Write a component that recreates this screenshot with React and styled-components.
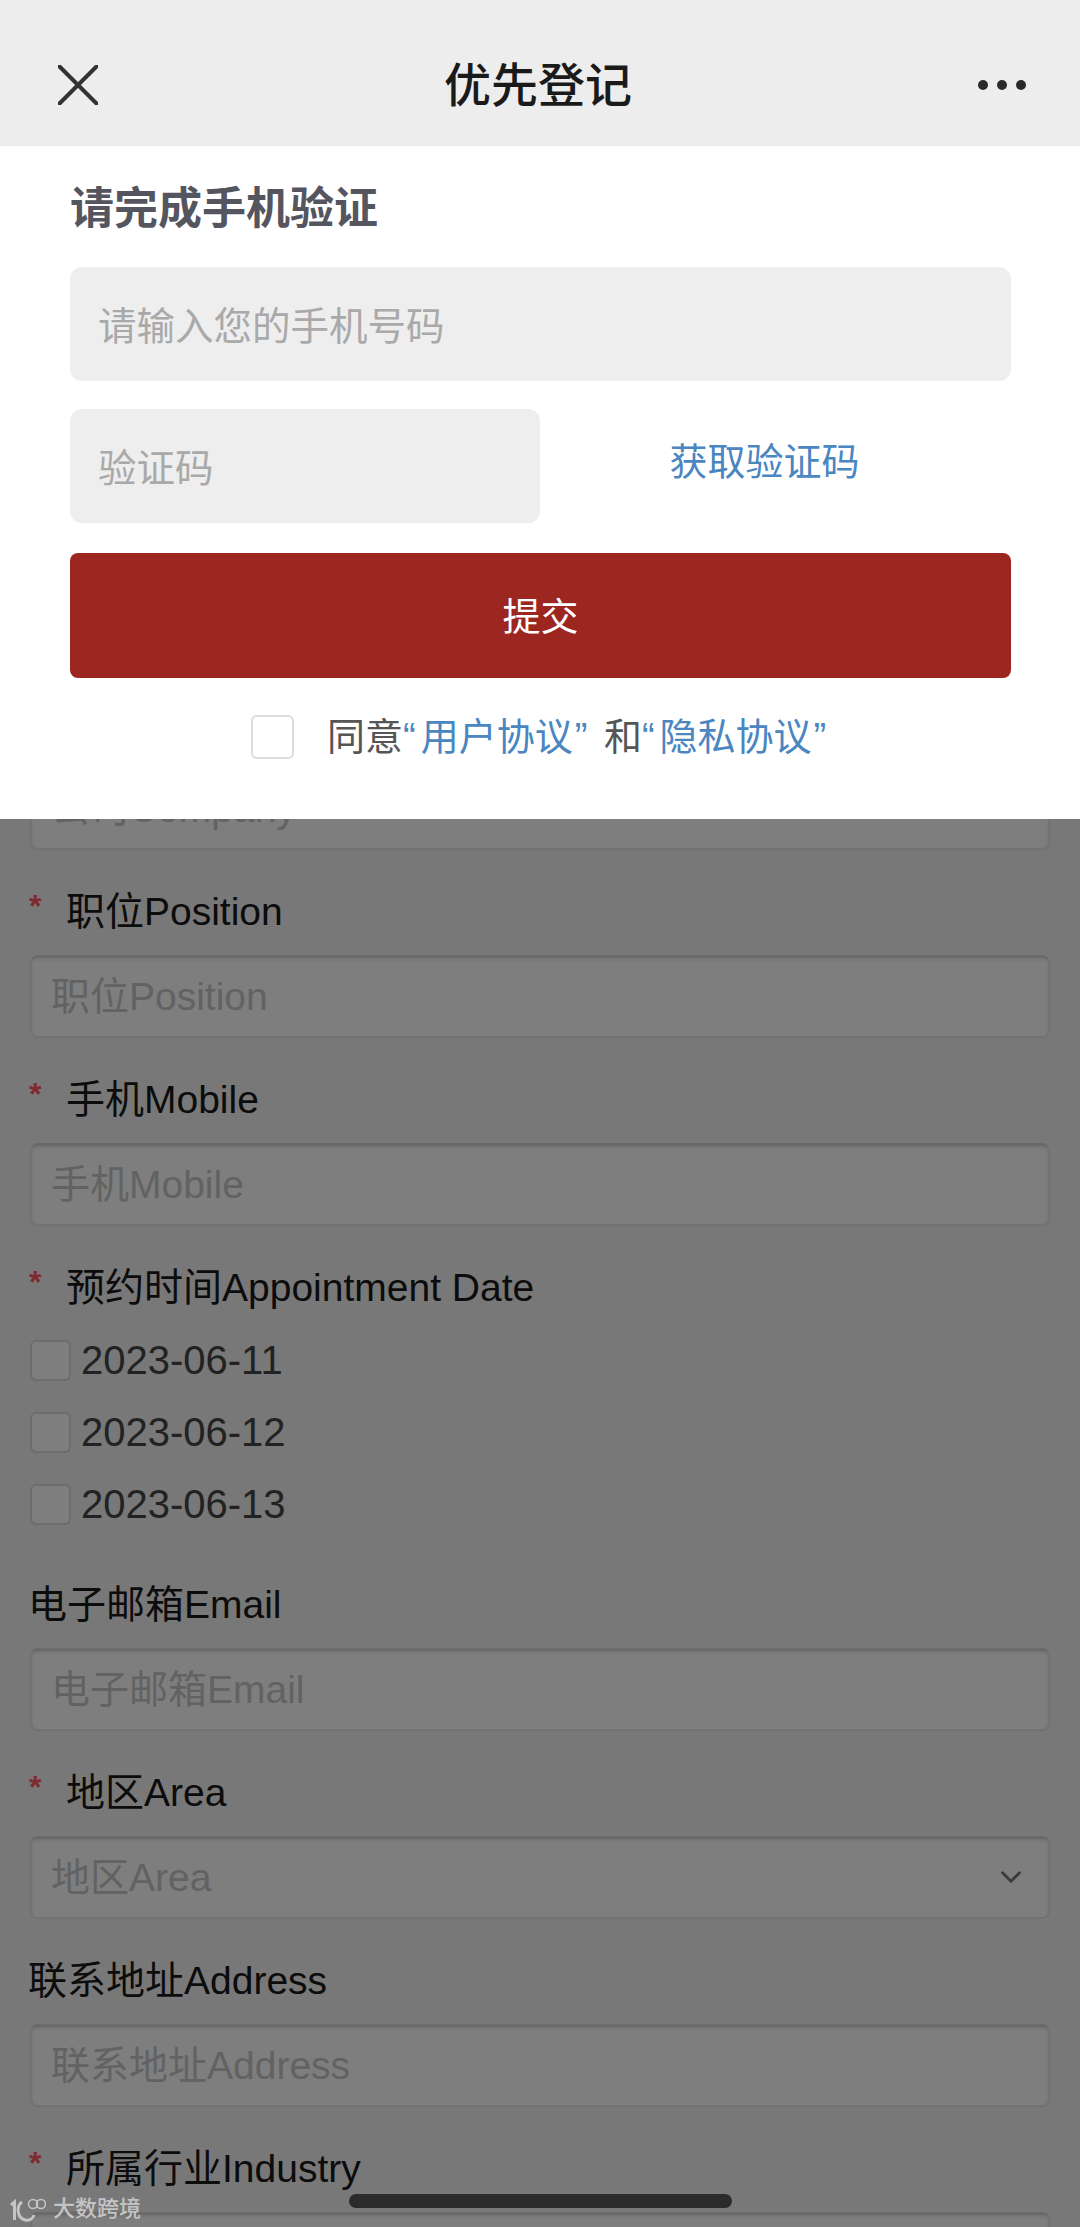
import React from "react";
import styled, { createGlobalStyle } from "styled-components";
import { ChevronDown } from "lucide-react";

const GlobalStyle = createGlobalStyle`
  html, body {
    margin: 0;
    padding: 0;
    background: #787878;
  }
  * {
    box-sizing: border-box;
  }
`;

const FONT = `"Liberation Sans", "Noto Sans CJK SC", sans-serif`;

const Screen = styled.div`
  position: relative;
  width: 1080px;
  height: 2227px;
  overflow: hidden;
  background: #787878;
  font-family: ${FONT};
`;

/* the form behind the sheet, dimmed */
const Form = styled.div`
  display: flex;
  flex-direction: column;
  gap: 30px;
  padding: 692px 30px 0;
`;

const Group = styled.div`
  display: flex;
  flex-direction: column;
  gap: 15px;
`;

const Label = styled.div`
  display: flex;
  align-items: center;
  height: 60px;
  margin-left: ${(p) => (p.$required ? "0" : "-2px")};
  padding: 0 0 5px ${(p) => (p.$required ? "36px" : "0")};
  position: relative;
  font-size: 39px;
  color: #0c0c0c;
`;

const Star = styled.span`
  position: absolute;
  left: -1px;
  top: 8px;
  font-size: 32px;
  font-weight: 700;
  color: #7f2a30;
`;

const Field = styled.div`
  position: relative;
  height: 83px;
  border: 2px solid #727272;
  border-top: 3px solid #6a6a6a;
  border-radius: 8px;
  background: #7e7e7e;
  box-shadow: inset 0 2px 3px rgba(0, 0, 0, 0.08);
`;

const FieldInput = styled.input`
  width: 100%;
  height: 100%;
  padding: 0 19px;
  border: none;
  outline: 0;
  background: transparent;
  font-family: ${FONT};
  font-size: 39px;

  &::placeholder {
    color: #626262;
    opacity: 1;
  }
`;

const FieldArrow = styled(ChevronDown)`
  position: absolute;
  right: 20px;
  top: 21px;
  color: #3c3c3c;
`;

const Dates = styled.div`
  display: flex;
  flex-direction: column;
  margin: -7px 0 3px;
`;

const DateRow = styled.div`
  display: flex;
  align-items: center;
  gap: 10px;
  height: 72px;
  font-size: 40px;
  color: #222;
`;

const DateBox = styled.span`
  width: 41px;
  height: 41px;
  border: 2px solid #6d6d6d;
  border-radius: 6px;
  background: #7e7e7e;
`;

/* verification sheet lying over the form */
const Sheet = styled.div`
  position: absolute;
  top: 0;
  left: 0;
  right: 0;
  background: #fff;
`;

const NavBar = styled.div`
  display: grid;
  grid-template-columns: 1fr auto 1fr;
  align-items: center;
  height: 146px;
  padding: 24px 53px 0 58px;
  background: #ededed;
`;

const NavTitle = styled.div`
  margin: 0 9px 8px 0;
  font-size: 47px;
  font-weight: 500;
  color: #1a1a1a;
`;

const NavClose = styled.svg`
  display: block;
  width: 40px;
  height: 40px;
`;

const NavMore = styled.svg`
  display: block;
  justify-self: end;
  width: 50px;
  height: 12px;
`;

const SheetBody = styled.div`
  display: flex;
  flex-direction: column;
  padding: 41px 69px 60px 70px;
`;

const Heading = styled.div`
  height: 44px;
  line-height: 44px;
  margin-bottom: 36px;
  font-size: 44px;
  font-weight: 700;
  color: #55555f;
`;

const CodeRow = styled.div`
  display: flex;
  align-items: center;
  margin: 28px 0 30px;
`;

const SheetInput = styled.input`
  display: block;
  width: ${(p) => p.$width || "100%"};
  height: 114px;
  padding: 5px 28px 0;
  border: none;
  border-radius: 12px;
  outline: 0;
  background: #eeeeee;
  font-family: ${FONT};
  font-size: 38.5px;

  &::placeholder {
    color: #a9a9a9;
    opacity: 1;
  }
`;

const GetCode = styled.a`
  flex: 1;
  padding: 0 22px 16px 0;
  text-align: center;
  font-size: 38px;
  color: #4a86c0;
`;

const SubmitButton = styled.button`
  height: 125px;
  padding: 0 0 5px;
  border: none;
  border-radius: 8px;
  background: #9c2620;
  font-family: ${FONT};
  font-size: 38px;
  color: #fff;
`;

const Agree = styled.div`
  display: flex;
  align-items: center;
  gap: 33px;
  height: 44px;
  margin-top: 37px;
  padding-left: 181px;
  font-size: 38px;
  color: #555;
`;

const AgreeText = styled.span`
  margin-bottom: 8px;
`;

const AgreeBox = styled.span`
  width: 43px;
  height: 44px;
  border: 2px solid #dcdcdc;
  border-radius: 6px;
  background: #fff;
`;

const Link = styled.span`
  color: #4a86c0;
`;

const OpenQuote = styled.span`
  letter-spacing: 5px;
`;

const CloseQuote = styled.span`
  margin-left: 2px;
  letter-spacing: 6px;
`;

/* things fixed on top of the screenshot */
const HomeBar = styled.div`
  position: absolute;
  left: 349px;
  top: 2194px;
  width: 383px;
  height: 14px;
  border-radius: 7px;
  background: #2b2b2b;
`;

const Watermark = styled.div`
  position: absolute;
  left: 10px;
  top: 2196px;
  display: flex;
  align-items: center;
  gap: 7px;
  line-height: 26px;
  font-size: 22px;
  font-weight: 500;
  color: #c4c4c4;
`;

const WatermarkLogo = styled.svg`
  display: block;
  width: 36px;
  height: 26px;
`;

const FIELDS_TOP = [{ label: "公司Company" }, { label: "职位Position", required: true }, { label: "手机Mobile", required: true }];
const FIELDS_BOTTOM = [
  { label: "电子邮箱Email" },
  { label: "地区Area", required: true, select: true },
  { label: "联系地址Address" },
  { label: "所属行业Industry", required: true },
];
const DATES = ["2023-06-11", "2023-06-12", "2023-06-13"];

const FormField = ({ label, required, select }) => (
  <Group>
    <Label $required={required}>
      {required && <Star>*</Star>}
      {label}
    </Label>
    <Field>
      <FieldInput placeholder={label} readOnly />
      {select && <FieldArrow size={34} strokeWidth={2} />}
    </Field>
  </Group>
);

const App = () => (
  <Screen>
    <GlobalStyle />
    <Form>
      {FIELDS_TOP.map((f) => (
        <FormField key={f.label} {...f} />
      ))}
      <Group>
        <Label $required>
          <Star>*</Star>
          预约时间Appointment Date
        </Label>
        <Dates>
          {DATES.map((d) => (
            <DateRow key={d}>
              <DateBox />
              {d}
            </DateRow>
          ))}
        </Dates>
      </Group>
      {FIELDS_BOTTOM.map((f) => (
        <FormField key={f.label} {...f} />
      ))}
    </Form>

    <Sheet>
      <NavBar>
        <NavClose viewBox="0 0 40 40">
          <path d="M1.5 1.5 L38.5 38.5 M38.5 1.5 L1.5 38.5" stroke="#333" strokeWidth="4" strokeLinecap="round" fill="none" />
        </NavClose>
        <NavTitle>优先登记</NavTitle>
        <NavMore viewBox="0 0 50 12">
          <circle cx="6" cy="6" r="5" fill="#2a2a2a" />
          <circle cx="25" cy="6" r="5" fill="#2a2a2a" />
          <circle cx="44" cy="6" r="5" fill="#2a2a2a" />
        </NavMore>
      </NavBar>
      <SheetBody>
        <Heading>请完成手机验证</Heading>
        <SheetInput placeholder="请输入您的手机号码" readOnly />
        <CodeRow>
          <SheetInput $width="470px" placeholder="验证码" readOnly />
          <GetCode>获取验证码</GetCode>
        </CodeRow>
        <SubmitButton>提交</SubmitButton>
        <Agree>
          <AgreeBox />
          <AgreeText>
            同意
            <Link>
              <OpenQuote>“</OpenQuote>用户协议<CloseQuote>”</CloseQuote>
            </Link>{" "}
            和
            <Link>
              <OpenQuote>“</OpenQuote>隐私协议<CloseQuote>”</CloseQuote>
            </Link>
          </AgreeText>
        </Agree>
      </SheetBody>
    </Sheet>

    <Watermark>
      <WatermarkLogo viewBox="0 0 36 26">
        <path d="M1 9 L4.5 6 V24" stroke="#c4c4c4" strokeWidth="3" fill="none" />
        <path d="M12 6 C6 10 7 22 15 24 C19 25 23 23 24 19" stroke="#c4c4c4" strokeWidth="3" fill="none" />
        <circle cx="23" cy="8" r="4.5" stroke="#c4c4c4" strokeWidth="1.6" fill="none" />
        <circle cx="31" cy="8" r="4.5" stroke="#c4c4c4" strokeWidth="1.6" fill="none" />
      </WatermarkLogo>
      大数跨境
    </Watermark>
    <HomeBar />
  </Screen>
);

export default App;
